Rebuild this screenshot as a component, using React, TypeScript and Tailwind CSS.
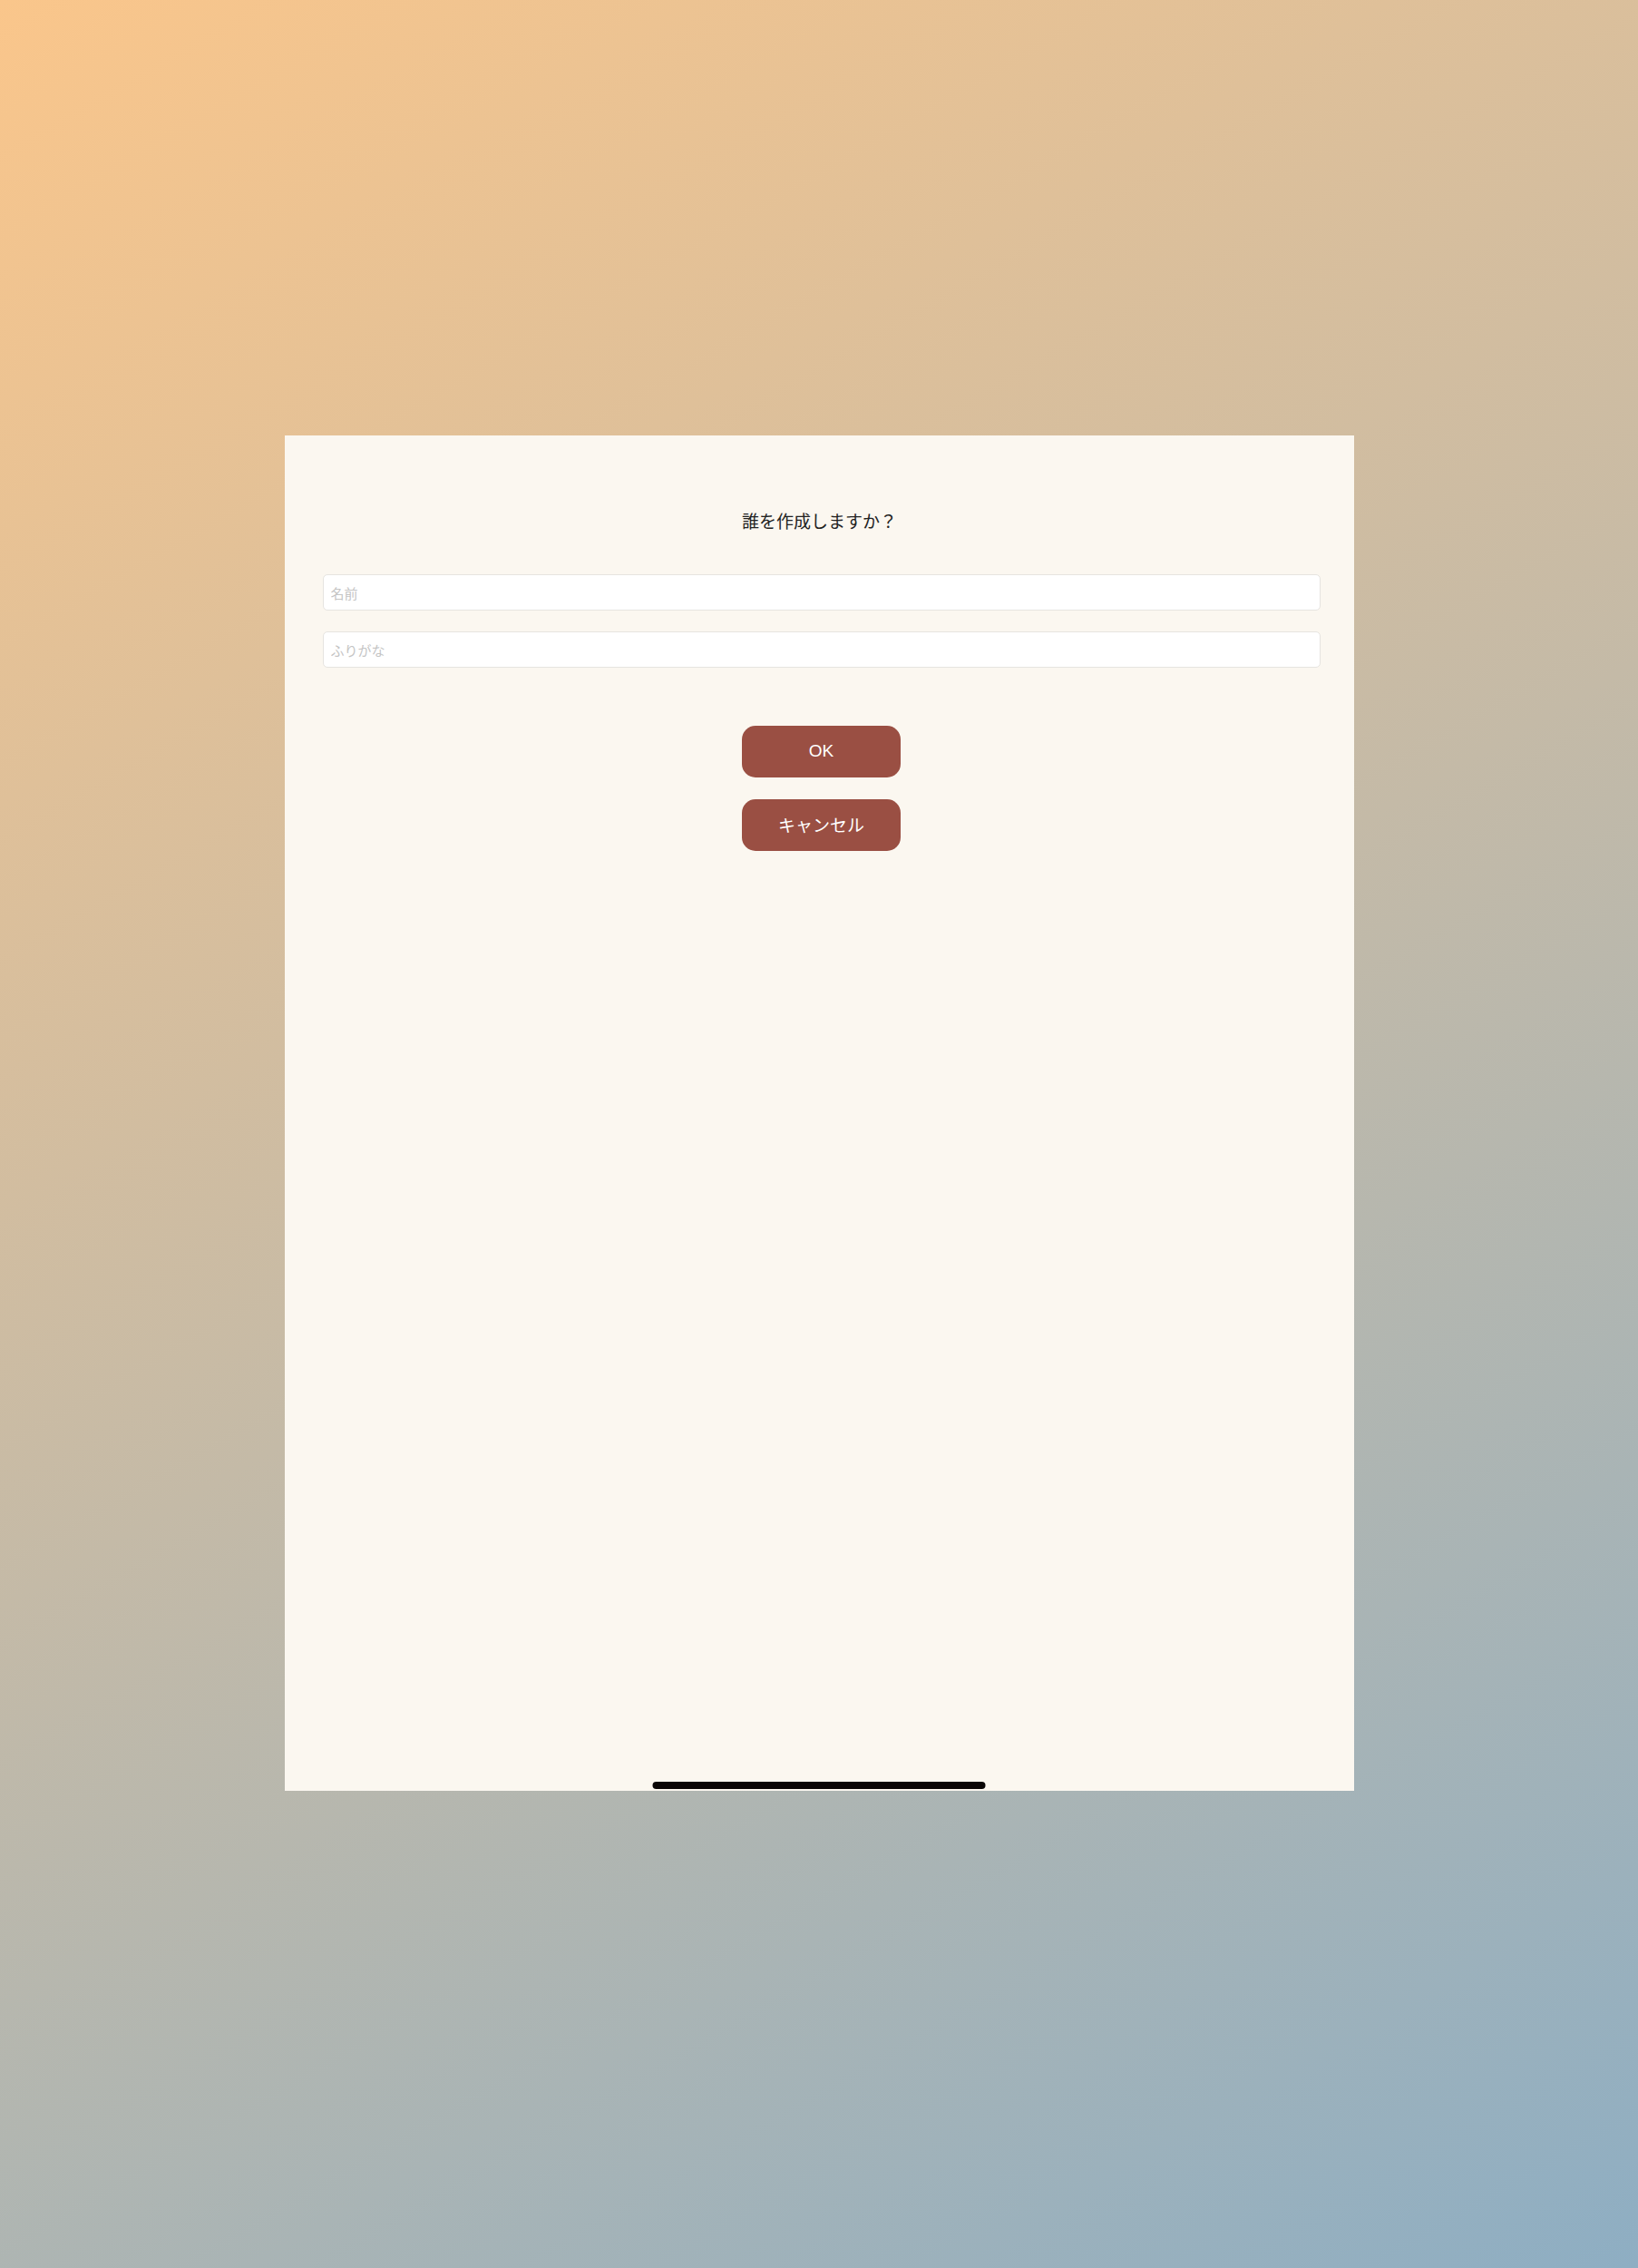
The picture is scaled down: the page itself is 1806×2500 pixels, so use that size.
export default function App() {
  return (
    <div className="w-full h-[2500px] flex justify-center pt-[480px] bg-[linear-gradient(150deg,#fac68b_0%,#8eaec3_100%)] font-['Liberation_Sans','Noto_Sans_CJK_JP',sans-serif]">
      <div className="relative w-[1179px] h-[1494px] bg-[#fbf7f0] flex flex-col items-center pl-[42px] pr-[37px]">
        {/* Title */}
        <h1 className="mt-[80px] -translate-x-[2px] leading-[28px] text-[19px] text-[#222] font-['Noto_Sans_CJK_JP',sans-serif] font-normal">
          誰を作成しますか？
        </h1>

        {/* Inputs */}
        <div className="mt-[45px] w-full flex flex-col gap-[23px]">
          <input
            placeholder="名前"
            className="w-full h-10 rounded-[5px] border border-[#e6e4e0] bg-white px-[8px] text-[15px] font-['Noto_Sans_CJK_JP',sans-serif] placeholder:text-[#c4c4c4] outline-none"
          />
          <input
            placeholder="ふりがな"
            className="w-full h-10 rounded-[5px] border border-[#e6e4e0] bg-white px-[8px] text-[15px] font-['Noto_Sans_CJK_JP',sans-serif] placeholder:text-[#c4c4c4] outline-none"
          />
        </div>

        {/* Buttons */}
        <div className="mt-[64px] flex flex-col gap-[24px]">
          <button className="w-[175px] h-[57px] rounded-[15px] bg-[#9a4f43] text-white text-[19px]">
            OK
          </button>
          <button className="w-[175px] h-[57px] rounded-[15px] bg-[#9a4f43] text-white text-[19px] font-['Noto_Sans_CJK_JP',sans-serif]">
            キャンセル
          </button>
        </div>

        {/* Home indicator */}
        <div className="absolute bottom-[2px] left-1/2 -translate-x-1/2 w-[367px] h-[8px] rounded-full bg-[#0a0606]" />
      </div>
    </div>
  );
}
